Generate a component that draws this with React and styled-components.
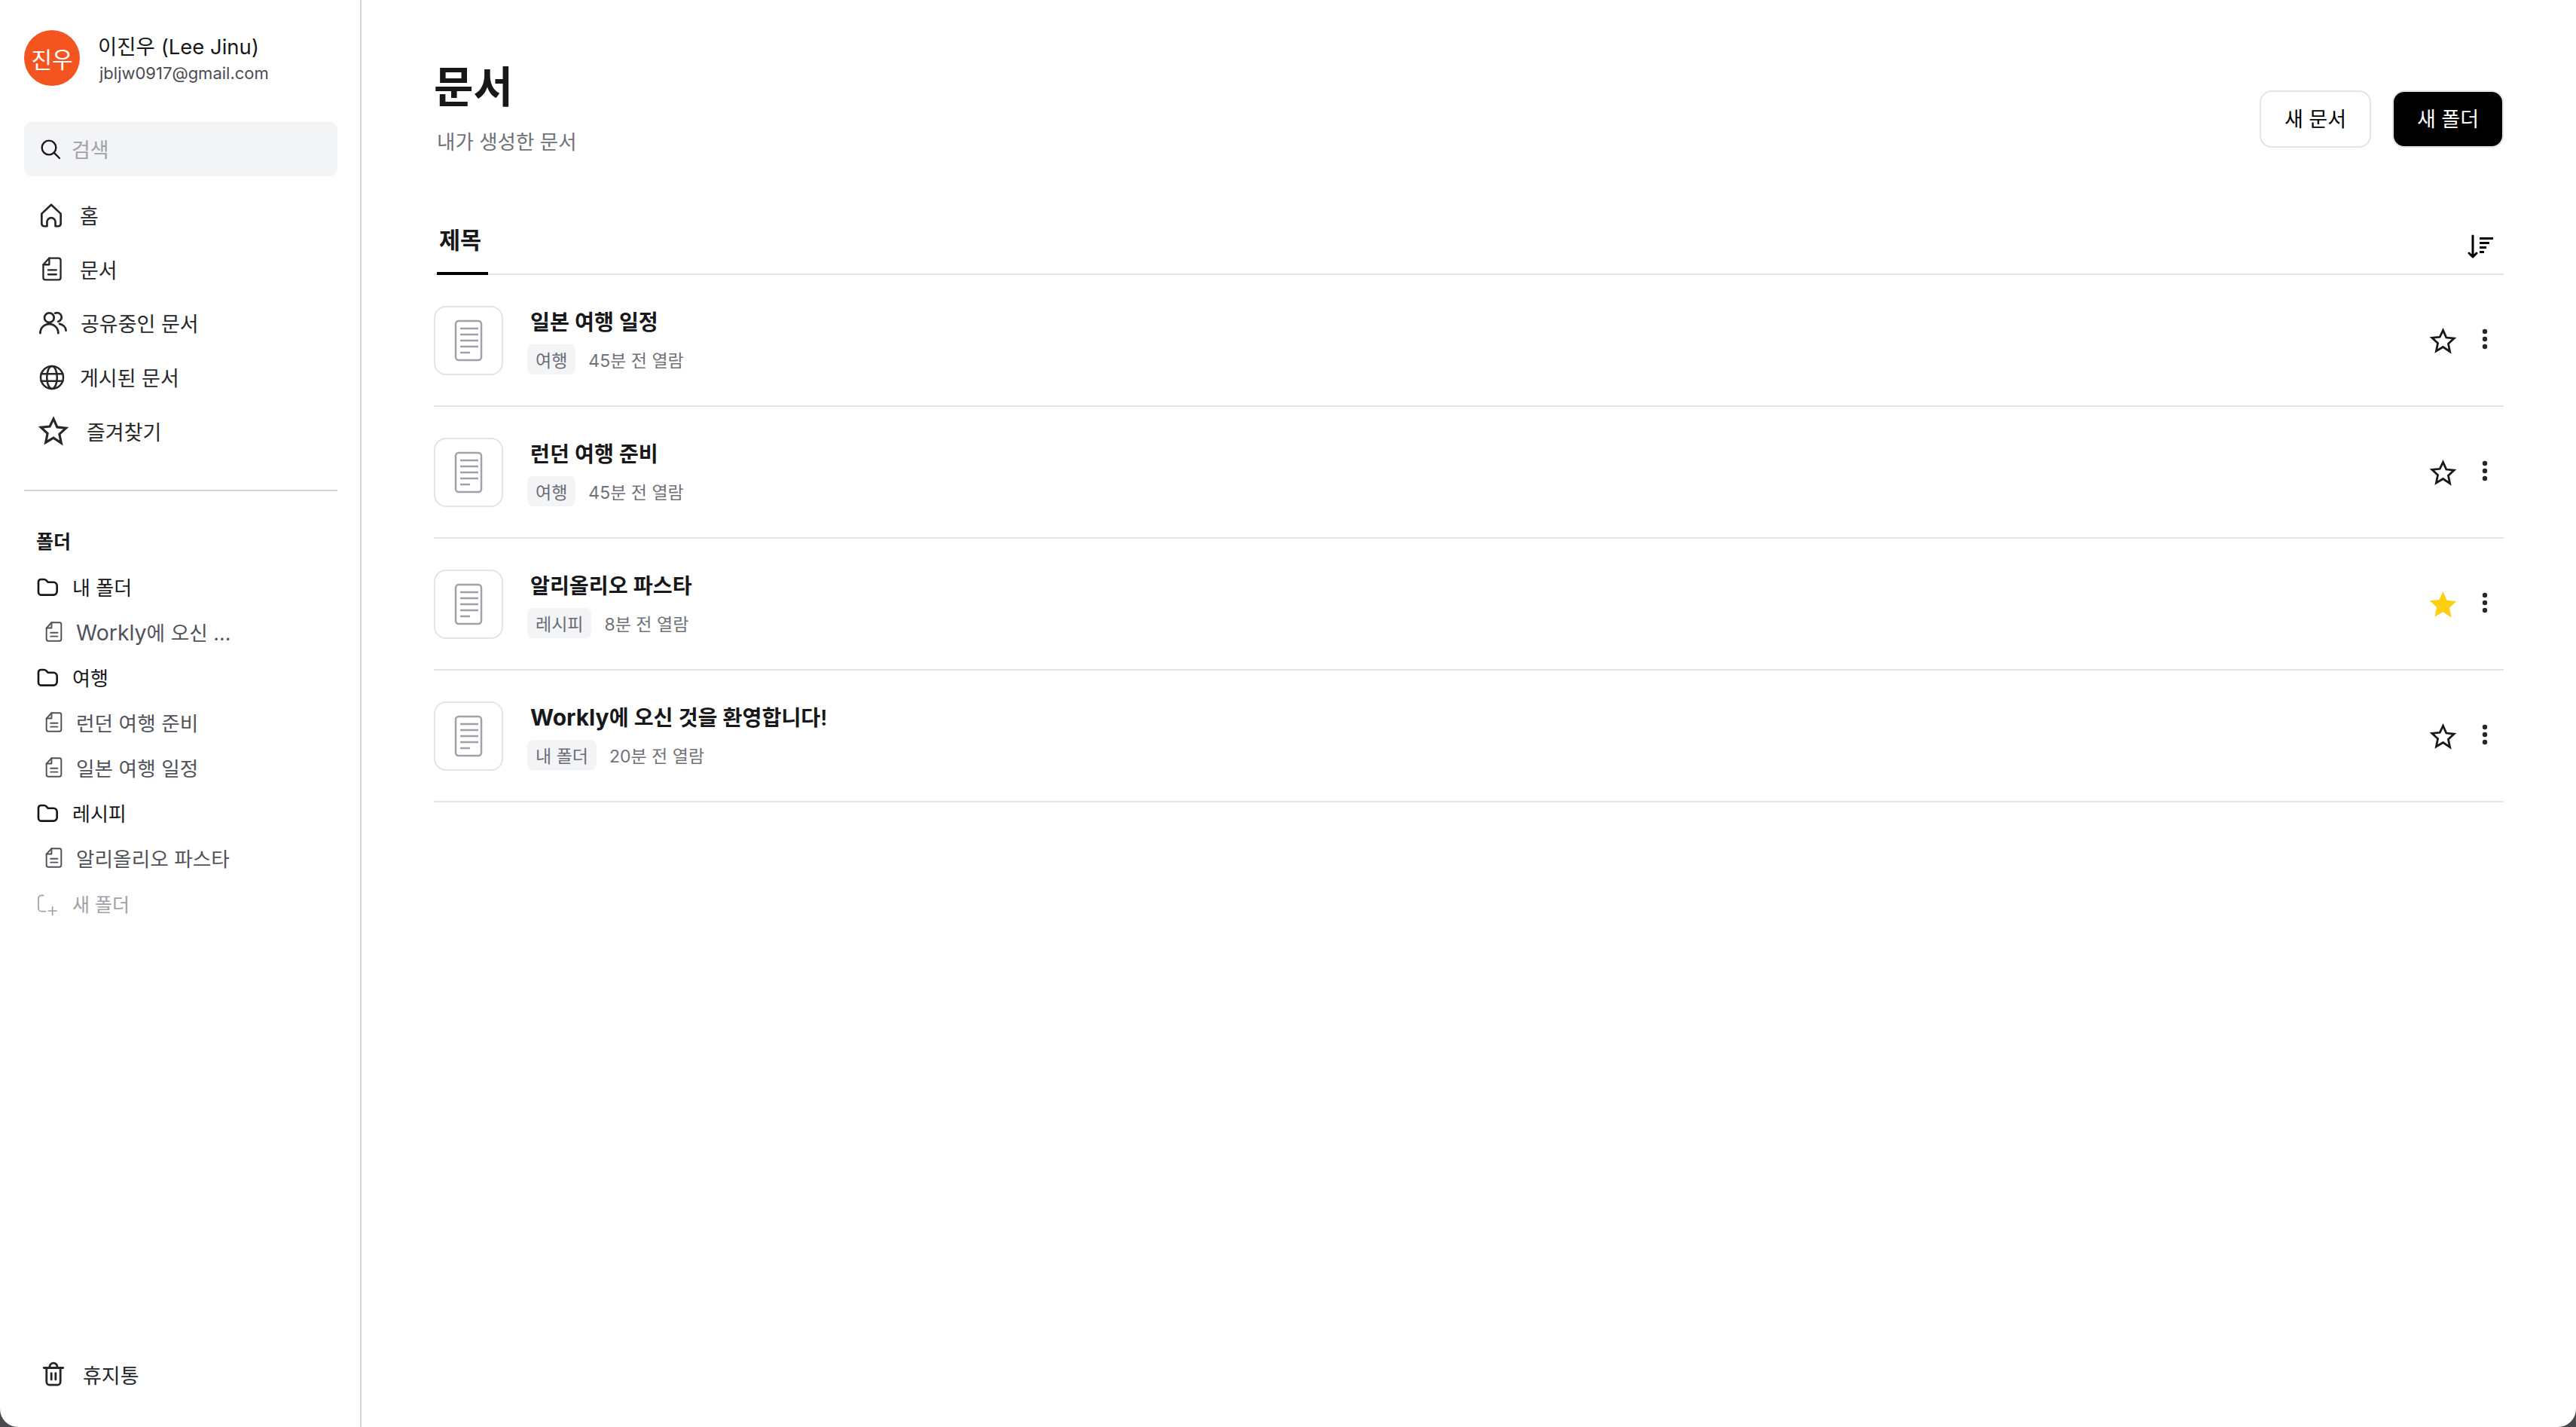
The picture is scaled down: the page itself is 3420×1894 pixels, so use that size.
import React from "react"
import styled, { createGlobalStyle } from "styled-components"

const GlobalStyle = createGlobalStyle`
  html, body { margin: 0; padding: 0; height: 100%; background: #4a4a4e; }
  #root { height: 100%; }
  * { box-sizing: border-box; }
  body { font-family: Inter, "Noto Sans CJK KR", sans-serif; color: #18181b; }
`

const Window = styled.div`
  display: flex;
  width: 3420px;
  height: 1894px;
  background: #fff;
  border-radius: 0 0 24px 24px;
  overflow: hidden;
`

const Sidebar = styled.aside`
  width: 480px;
  flex-shrink: 0;
  display: flex;
  flex-direction: column;
  padding: 40px 30px 0 32px;
  border-right: 2px solid #d1d1d9;
`

const Profile = styled.div`
  display: flex;
  align-items: center;
  gap: 24px;
`
const Avatar = styled.div`
  width: 74px;
  height: 74px;
  border-radius: 50%;
  background: #f45420;
  color: #fff;
  font-size: 30px;
  display: flex;
  align-items: center;
  justify-content: center;
`
const ProfileText = styled.div`
  display: flex;
  flex-direction: column;
  gap: 2px;
`
const ProfileName = styled.div`
  font-size: 27.5px;
  line-height: 38px;
  color: #18181b;
`
const ProfileMail = styled.div`
  margin-left: 2px;
  font-size: 22px;
  line-height: 28px;
  color: #4b4b55;
`

const Search = styled.div`
  margin-top: 48px;
  height: 72px;
  padding-bottom: 1px;
  background: #f3f4f6;
  border-radius: 10px;
  display: flex;
  align-items: center;
  gap: 12px;
  padding-left: 19px;
  font-size: 27px;
  color: #a1a1aa;
  svg { color: #18181b; }
`

const Nav = styled.nav`
  margin-top: 16px;
  display: flex;
  flex-direction: column;
`
const NavItem = styled.div`
  height: 71.6px;
  display: flex;
  align-items: center;
  gap: ${p => p.$gap}px;
  padding-left: ${p => p.$indent}px;
  font-size: 27px;
  color: #27272a;
`

const Divider = styled.div`
  margin-top: 42px;
  height: 2px;
  background: #d4d4d8;
`

const FolderTitle = styled.div`
  margin-top: 49px;
  padding-left: 16px;
  font-size: 25px;
  line-height: 36px;
  font-weight: 600;
  color: #18181b;
`
const FolderList = styled.div`
  margin-top: 12px;
  display: flex;
  flex-direction: column;
`
const FolderRow = styled.div`
  height: 60px;
  display: flex;
  align-items: center;
  gap: 17px;
  padding-left: 15px;
  font-size: ${p => (p.$muted ? "25px" : "26px")};
  color: ${p => (p.$muted ? "#a1a1aa" : "#18181b")};
`
const FileRow = styled.div`
  height: 60px;
  display: flex;
  align-items: center;
  gap: 18px;
  padding-left: 28px;
  font-size: 26.7px;
  color: #52525b;
`
const FileBrand = styled.span`
  font-size: 28.5px;
`

const Trash = styled.div`
  margin-top: auto;
  margin-bottom: 40px;
  padding-left: 22px;
  height: 60px;
  display: flex;
  align-items: center;
  gap: 22px;
  font-size: 27px;
  color: #27272a;
`

const Main = styled.main`
  flex: 1;
  padding: 0 96px;
  display: flex;
  flex-direction: column;
`
const Header = styled.header`
  height: 252px;
  padding-top: 76px;
  display: flex;
  justify-content: space-between;
`
const Heading = styled.h1`
  margin: 0;
  font-size: 57px;
  line-height: 80px;
  font-weight: 600;
  color: #18181b;
`
const SubHeading = styled.p`
  margin: 13px 0 0 4px;
  font-size: 26.5px;
  line-height: 38px;
  color: #71717a;
`
const Buttons = styled.div`
  display: flex;
  gap: 28px;
  padding-top: 44px;
`
const Button = styled.button`
  width: 148px;
  height: 76px;
  padding: 0 0 3px;
  border-radius: 16px;
  border: 2px solid #e4e4e7;
  background: ${p => (p.$dark ? "#000" : "#fff")};
  color: ${p => (p.$dark ? "#fff" : "#000")};
  font-family: inherit;
  font-size: 27px;
`

const TabBar = styled.div`
  height: 113px;
  border-bottom: 2px solid #e4e4e7;
  display: flex;
  align-items: flex-end;
  justify-content: space-between;
`
const Tab = styled.div`
  margin-left: 4px;
  margin-bottom: -2px;
  width: 68px;
  height: 88px;
  padding: 20px 0 0 3px;
  border-bottom: 4px solid #000;
  font-size: 30.5px;
  line-height: 44px;
  font-weight: 600;
`
const SortButton = styled.div`
  padding-right: 12px;
  padding-bottom: 18px;
  display: flex;
`

const DocRow = styled.div`
  height: 175px;
  border-bottom: 2px solid #e4e4e7;
  display: flex;
  align-items: center;
  gap: 32px;
`
const Thumb = styled.div`
  width: 92px;
  height: 92px;
  border: 2px solid #e4e4e7;
  border-radius: 16px;
  display: flex;
  align-items: center;
  justify-content: center;
`
const DocInfo = styled.div`
  flex: 1;
  display: flex;
  flex-direction: column;
  gap: 8px;
`
const DocTitle = styled.div`
  margin-left: 4px;
  font-size: 28.2px;
  line-height: 42px;
  font-weight: 600;
  color: #18181b;
`
const Latin = styled.span`
  font-size: 30px;
  font-weight: 700;
`
const DocMeta = styled.div`
  display: flex;
  align-items: center;
  gap: 17px;
  font-size: 23px;
  color: #71717a;
`
const Tag = styled.span`
  height: 40px;
  padding: 0 11px;
  border-radius: 8px;
  background: #f3f4f6;
  display: flex;
  align-items: center;
  color: #6b6b75;
`
const Actions = styled.div`
  display: flex;
  align-items: center;
  gap: 33px;
  padding-right: 21px;
`
const StarSlot = styled.span`
  display: flex;
  margin-top: 2px;
`
const DotsSlot = styled.span`
  display: flex;
  margin-top: -3px;
`

const Icon = ({ w, h, size = 32, children, sw = 2, vb = "0 0 24 24" }) => (
  <svg width={w || size} height={h || size} viewBox={vb} fill="none" stroke="currentColor" strokeWidth={sw} strokeLinecap="round" strokeLinejoin="round">
    {children}
  </svg>
)

const SearchIcon = () => (
  <Icon size={32} sw={1.8}>
    <circle cx="10.5" cy="10.5" r="7" />
    <path d="M15.5 15.5L21 21" />
  </Icon>
)
const HomeIcon = () => (
  <Icon size={38} sw={1.7}>
    <path d="M4 10.5L12 3l8 7.5V19a2 2 0 0 1-2 2h-2.5v-3.5a3.5 3.5 0 0 0-7 0V21H6a2 2 0 0 1-2-2z" />
  </Icon>
)
const FileIcon = ({ w = 26, h = 32, sw = 1.6 }) => (
  <Icon w={w} h={h} sw={sw} vb="3 1 18 22">
    <path d="M9.5 2H18a2 2 0 0 1 2 2v16a2 2 0 0 1-2 2H6a2 2 0 0 1-2-2V8z" />
    <path d="M9.5 2v6H4" />
    <path d="M8.5 13h7.5M8.5 17h7.5" />
  </Icon>
)
const UsersIcon = () => (
  <Icon size={41} sw={1.6}>
    <circle cx="9" cy="8" r="3.7" />
    <path d="M2 20c0-4 3-7 7-7s7 3 7 7" />
    <path d="M13.5 4.5a3.5 3.5 0 1 1 2.5 6.5" />
    <path d="M17 12.8c2.5.6 5 2.4 5 5.2" />
  </Icon>
)
const GlobeIcon = () => (
  <Icon size={36} sw={1.7}>
    <circle cx="12" cy="12" r="10" />
    <ellipse cx="12" cy="12" rx="4.5" ry="10" />
    <path d="M2.5 8.8h19M2.500 15.2h19" />
  </Icon>
)
const StarIcon = ({ size = 42, filled }) => (
  <svg width={size} height={size} viewBox="0 0 24 24" fill={filled ? "#ffd012" : "none"} stroke={filled ? "#ffd012" : "currentColor"} strokeWidth="1.8" strokeLinejoin="miter">
    <path d="M12 2.800l2.800 6.300 6.700.7-5 4.600 1.400 6.800L12 17.200l-5.900 3.500 1.400-6.800-5-4.600 6.700-.7z" />
  </svg>
)
const FolderIcon = () => (
  <Icon size={32}>
    <path d="M3 7a2.500 2.500 0 0 1 2.500-2.500h3.200c1 0 1.600.4 2.200 1l1 1.200c.4.400.8.600 1.400.6h4.700A3.500 3.500 0 0 1 21.500 11v5.500A3.500 3.500 0 0 1 18 20H6a3 3 0 0 1-3-3z" />
  </Icon>
)
const NewFolderIcon = () => (
  <Icon size={32} sw={1.3}>
    <path d="M8 4H6A3 3 0 0 0 3 7V17a3 3 0 0 0 3 3h4" />
    <path d="M17 15.500v8M13 19.500h8" />
  </Icon>
)
const TrashIcon = () => (
  <Icon size={34}>
    <path d="M3 6h18" />
    <path d="M5.500 6v13a3 3 0 0 0 3 3h7a3 3 0 0 0 3-3V6" />
    <path d="M8.500 6V5a3.500 3.500 0 0 1 7 0v1" />
    <path d="M10 11v6M14 11v6" />
  </Icon>
)
const SortIcon = () => (
  <svg width="36" height="34" viewBox="0 0 36 34" fill="none" stroke="#000" strokeWidth="3">
    <path d="M7 2v28M2 25l5 5 5-5" strokeLinecap="round" strokeLinejoin="round" />
    <path d="M16 5.500h18M16 11.500h13M16 17.500h9M16 23.500h6" />
  </svg>
)
const DotsIcon = () => (
  <svg width="8" height="28" viewBox="0 0 8 28" fill="#27272a">
    <circle cx="4" cy="4" r="3.200" />
    <circle cx="4" cy="14" r="3.200" />
    <circle cx="4" cy="24" r="3.200" />
  </svg>
)
const PageIcon = () => (
  <svg width="38" height="56" viewBox="0 0 38 56" fill="none" stroke="#a1a1aa" strokeWidth="2.500">
    <rect x="2" y="2" width="34" height="52" rx="4" />
    <path d="M8 12h24M8 20h24M8 28h24M8 36h24M8 44h13" />
  </svg>
)

const docs = [
  { title: "일본 여행 일정", tag: "여행", time: "45분 전 열람" },
  { title: "런던 여행 준비", tag: "여행", time: "45분 전 열람" },
  { title: "알리올리오 파스타", tag: "레시피", time: "8분 전 열람", starred: true },
  { brand: "Workly", title: "에 오신 것을 환영합니다!", tag: "내 폴더", time: "20분 전 열람" },
]

const App = () => (
  <Window>
    <GlobalStyle />
    <Sidebar>
      <Profile>
        <Avatar>진우</Avatar>
        <ProfileText>
          <ProfileName>이진우 (Lee Jinu)</ProfileName>
          <ProfileMail>jbljw0917@gmail.com</ProfileMail>
        </ProfileText>
      </Profile>
      <Search>
        <SearchIcon />
        검색
      </Search>
      <Nav>
        <NavItem $indent={17} $gap={19}><HomeIcon />홈</NavItem>
        <NavItem $indent={24} $gap={24}><FileIcon />문서</NavItem>
        <NavItem $indent={18} $gap={16}><UsersIcon />공유중인 문서</NavItem>
        <NavItem $indent={19} $gap={19}><GlobeIcon />게시된 문서</NavItem>
        <NavItem $indent={18} $gap={23}><StarIcon />즐겨찾기</NavItem>
      </Nav>
      <Divider />
      <FolderTitle>폴더</FolderTitle>
      <FolderList>
        <FolderRow><FolderIcon />내 폴더</FolderRow>
        <FileRow><FileIcon w={23} h={27} /><span><FileBrand>Workly</FileBrand>에 오신 ...</span></FileRow>
        <FolderRow><FolderIcon />여행</FolderRow>
        <FileRow><FileIcon w={23} h={27} />런던 여행 준비</FileRow>
        <FileRow><FileIcon w={23} h={27} />일본 여행 일정</FileRow>
        <FolderRow><FolderIcon />레시피</FolderRow>
        <FileRow><FileIcon w={23} h={27} />알리올리오 파스타</FileRow>
        <FolderRow $muted><NewFolderIcon />새 폴더</FolderRow>
      </FolderList>
      <Trash><TrashIcon />휴지통</Trash>
    </Sidebar>
    <Main>
      <Header>
        <div>
          <Heading>문서</Heading>
          <SubHeading>내가 생성한 문서</SubHeading>
        </div>
        <Buttons>
          <Button>새 문서</Button>
          <Button $dark>새 폴더</Button>
        </Buttons>
      </Header>
      <TabBar>
        <Tab>제목</Tab>
        <SortButton><SortIcon /></SortButton>
      </TabBar>
      {docs.map(d => (
        <DocRow key={d.title}>
          <Thumb><PageIcon /></Thumb>
          <DocInfo>
            <DocTitle>{d.brand && <Latin>{d.brand}</Latin>}{d.title}</DocTitle>
            <DocMeta>
              <Tag>{d.tag}</Tag>
              {d.time}
            </DocMeta>
          </DocInfo>
          <Actions>
            <StarSlot><StarIcon size={37} filled={d.starred} /></StarSlot>
            <DotsSlot><DotsIcon /></DotsSlot>
          </Actions>
        </DocRow>
      ))}
    </Main>
  </Window>
)

export default App
